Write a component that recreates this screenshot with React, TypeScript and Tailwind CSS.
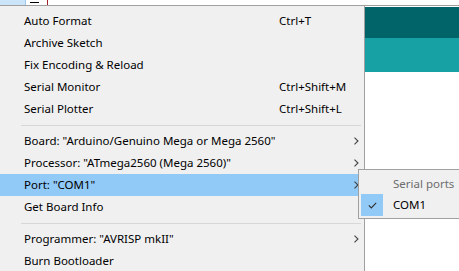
import React from 'react';

type Item =
    | { kind: 'item'; label: string; shortcut?: string; sub?: boolean; active?: boolean }
    | { kind: 'sep' };

const items: Item[] = [
    { kind: 'item', label: 'Auto Format', shortcut: 'Ctrl+T' },
    { kind: 'item', label: 'Archive Sketch' },
    { kind: 'item', label: 'Fix Encoding & Reload' },
    { kind: 'item', label: 'Serial Monitor', shortcut: 'Ctrl+Shift+M' },
    { kind: 'item', label: 'Serial Plotter', shortcut: 'Ctrl+Shift+L' },
    { kind: 'sep' },
    { kind: 'item', label: 'Board: "Arduino/Genuino Mega or Mega 2560"', sub: true },
    { kind: 'item', label: 'Processor: "ATmega2560 (Mega 2560)"', sub: true },
    { kind: 'item', label: 'Port: "COM1"', sub: true, active: true },
    { kind: 'item', label: 'Get Board Info' },
    { kind: 'sep' },
    { kind: 'item', label: 'Programmer: "AVRISP mkII"', sub: true },
    { kind: 'item', label: 'Burn Bootloader' },
];

function Chevron() {
    return (
        <svg width="5" height="8" viewBox="0 0 5 8" className="text-[#404040]">
            <path d="M0.5 0.5 L4 4 L0.5 7.5" fill="none" stroke="currentColor" strokeWidth="1.1" />
        </svg>
    );
}

export default function App() {
    return (
        <div
            className="relative w-[459px] h-[271px] overflow-hidden bg-white text-[11.5px] text-black"
            style={{ fontFamily: '"Noto Sans", "Open Sans", sans-serif' }}
        >
            {/* app window behind the menu */}
            <div className="flex h-[5px]">
                <div className="w-[26px] bg-[#cce4f7] border-r border-[#99c9ef]" />
                <div className="flex-1 flex items-center gap-2 pl-1">
                    <div className="w-[9px] h-px bg-black" />
                    <div className="w-px h-[5px] bg-[#a0202a]" />
                </div>
            </div>
            <div className="h-px bg-[#a0a0a0]" />
            <div className="flex h-[265px]">
                <div className="w-[365px] shrink-0 bg-[#f0f0f0] border-r border-[#a0a0a0] pt-[4px]">
                    {items.map((it, i) =>
                        it.kind === 'sep' ? (
                            <div key={i} className="h-[10px] flex items-center pl-[21px] pr-[3px]">
                                <div className="h-px w-full bg-[#d7d7d7]" />
                            </div>
                        ) : (
                            <div
                                key={i}
                                className={`h-[22px] flex items-center pl-[24px] pr-[5px] ${it.active ? 'bg-[#91c9f7]' : ''}`}
                            >
                                <span className="w-[255px] whitespace-nowrap">{it.label}</span>
                                <span className="w-[77px] whitespace-nowrap">{it.shortcut ?? ''}</span>
                                {it.sub && <Chevron />}
                            </div>
                        )
                    )}
                </div>
                <div className="flex-1 flex flex-col">
                    <div className="h-px bg-white" />
                    <div className="h-[31px] bg-[#006468]" />
                    <div className="h-[34px] bg-[#17a1a5]" />
                    <div className="flex-1 bg-white" />
                </div>
            </div>

            {/* Port submenu */}
            <div className="absolute left-[358px] top-[169px] w-[130px] h-[50px] bg-[#f0f0f0] border border-[#a0a0a0] pt-px pl-[2px]">
                <div className="h-[23px] flex items-center pt-[2px] pl-[32px] text-[#6d6d6d]">Serial ports</div>
                <div className="h-[22px] flex items-center">
                    <div className="w-[22px] h-[22px] bg-[#91c9f7] flex items-center justify-center">
                        <svg width="9" height="7" viewBox="0 0 9 7">
                            <path d="M0.8 3.4 L3.3 5.9 L8.2 0.8" fill="none" stroke="#303030" strokeWidth="1.1" />
                        </svg>
                    </div>
                    <span className="pl-[10px]">COM1</span>
                </div>
            </div>
        </div>
    );
}
